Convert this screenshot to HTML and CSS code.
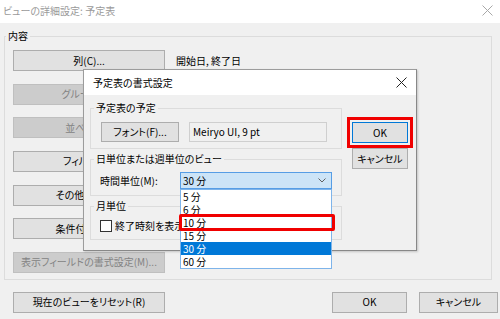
FILE: index.html
```html
<!DOCTYPE html>
<html lang="ja">
<head>
<meta charset="utf-8">
<title>ビューの詳細設定</title>
<link rel="stylesheet" href="styles.css">
</head>
<body>
<div class="window">
  <div class="titlebar">
    <span class="title">ビューの詳細設定: 予定表</span>
    <svg class="close-x" width="11" height="11" viewBox="0 0 11 11"><path d="M0.5 0.5 L10.5 10.5 M10.5 0.5 L0.5 10.5" stroke="#a8a8a8" stroke-width="1" fill="none"/></svg>
  </div>

  <fieldset class="group main-group">
    <legend>内容</legend>
    <div class="rows">
      <div class="row"><button class="btn wide">列(C)...</button><span class="value">開始日, 終了日</span></div>
      <div class="row"><button class="btn wide" disabled>グループ化...</button></div>
      <div class="row"><button class="btn wide" disabled>並べ替え...</button></div>
      <div class="row"><button class="btn wide">フィルター...</button></div>
      <div class="row"><button class="btn wide">その他の設定...</button></div>
      <div class="row"><button class="btn wide">条件付き書式...</button></div>
      <div class="row"><button class="btn wide" disabled>表示フィールドの書式設定(M)...</button></div>
    </div>
  </fieldset>

  <div class="footer">
    <button class="btn wide">現在のビューをリセット(R)</button>
    <div class="footer-right">
      <button class="btn ok-main">OK</button>
      <button class="btn cancel-main">キャンセル</button>
    </div>
  </div>

  <div class="dialog">
    <div class="dlg-titlebar">
      <span class="dlg-title">予定表の書式設定</span>
      <svg class="close-x dlg-close" width="11" height="11" viewBox="0 0 11 11"><path d="M0.5 0.5 L10.5 10.5 M10.5 0.5 L0.5 10.5" stroke="#222" stroke-width="1" fill="none"/></svg>
    </div>
    <div class="dlg-body">
      <div class="dlg-left">
        <fieldset class="group sub-group g1">
          <legend>予定表の予定</legend>
          <div class="g1-content">
            <button class="btn font-btn">フォント(F)...</button>
            <div class="font-box">Meiryo UI, 9 pt</div>
          </div>
        </fieldset>
        <fieldset class="group sub-group g2">
          <legend>日単位または週単位のビュー</legend>
          <div class="g2-content">
            <span class="field-label">時間単位(M):</span>
            <div class="combo-wrap">
              <div class="combo">
                <span>30 分</span>
                <svg class="chev" width="8" height="5" viewBox="0 0 8 5"><path d="M0.5 0.5 L4 4 L7.5 0.5" stroke="#606060" stroke-width="1" fill="none"/></svg>
              </div>
              <ul class="list">
                <li>5 分</li>
                <li>6 分</li>
                <li>10 分</li>
                <li>15 分</li>
                <li class="sel">30 分</li>
                <li>60 分</li>
              </ul>
              <div class="mark mark-item"></div>
            </div>
          </div>
        </fieldset>
        <fieldset class="group sub-group g3">
          <legend>月単位</legend>
          <div class="g3-content">
            <span class="checkbox"></span>
            <span>終了時刻を表示</span>
          </div>
        </fieldset>
      </div>
      <div class="dlg-right">
        <button class="btn dlg-btn ok-dlg">OK</button>
        <button class="btn dlg-btn">キャンセル</button>
      </div>
    </div>
  </div>
</div>
</body>
</html>
```

FILE: styles.css
```css
html, body {
  margin: 0;
  padding: 0;
}
body {
  width: 500px;
  height: 319px;
  overflow: hidden;
  background: #f0f0f0;
  font-family: "Noto Sans CJK JP", "Noto Sans", sans-serif;
  font-size: 10px;
  line-height: 12px;
  font-feature-settings: "palt" 1;
  color: #000;
}
.window {
  position: relative;
  width: 500px;
  height: 319px;
}
.titlebar {
  height: 23px;
  background: #fff;
  display: flex;
  align-items: center;
  justify-content: space-between;
  padding: 0 7px 2px 3px;
  box-sizing: border-box;
}
.title {
  color: #9a9a9a;
}
.close-x {
  display: block;
}

.group {
  border: 1px solid #dcdcdc;
  margin: 0;
  padding: 0;
  min-width: 0;
}
.group legend {
  padding: 0 2px;
  line-height: 12px;
}
.main-group {
  margin: 7px 0 0 4px;
  width: 488px;
  box-sizing: border-box;
}
.main-group legend {
  margin-left: 1px;
}
.rows {
  display: grid;
  grid-auto-rows: 21px;
  row-gap: 12.67px;
  padding: 8px 0 6px 8px;
}
.row {
  display: flex;
  align-items: center;
}
.value {
  margin-left: 11px;
}

.btn {
  font: inherit;
  font-feature-settings: "palt" 1;
  color: #000;
  background: #e1e1e1;
  border: 1px solid #adadad;
  padding: 0;
  margin: 0;
  box-sizing: border-box;
  white-space: nowrap;
  overflow: hidden;
}
.btn:disabled {
  background: #cccccc;
  border-color: #bfbfbf;
  color: #838383;
}
.wide {
  width: 152px;
  height: 21px;
}

.footer {
  display: flex;
  justify-content: space-between;
  margin-top: 12px;
  padding: 0 2px 0 13px;
}
.footer-right {
  display: flex;
  gap: 12px;
}
.ok-main {
  width: 75px;
  height: 21px;
}
.cancel-main {
  width: 79px;
  height: 21px;
}

/* inner dialog */
.dialog {
  position: absolute;
  left: 83px;
  top: 69px;
  width: 334px;
  height: 182px;
  box-sizing: border-box;
  border: 1px solid #9c9c9c;
  border-right-color: #888;
  border-bottom-color: #888;
  background: #f0f0f0;
  box-shadow: 1px 1px 2px rgba(0, 0, 0, 0.18);
}
.dlg-titlebar {
  height: 25px;
  background: #fff;
  display: flex;
  align-items: center;
  justify-content: space-between;
  padding: 0 9px 0 9px;
  box-sizing: border-box;
}
.dlg-title {
  font-size: 10px;
}
.dlg-body {
  display: flex;
  padding: 7px 0 0 6px;
}
.dlg-left {
  width: 252px;
}
.sub-group legend {
  margin-left: 3px;
}
.g2, .g3 {
  margin-top: 4px;
}
.g1-content {
  display: flex;
  align-items: center;
  gap: 10px;
  padding: 8px 13px 6px 10px;
}
.font-btn {
  width: 78px;
  height: 20px;
}
.font-box {
  width: 138px;
  height: 20px;
  box-sizing: border-box;
  border: 1px solid #cfcfcf;
  background: #f0f0f0;
  padding-left: 3px;
  display: flex;
  align-items: center;
}
.g2-content {
  display: flex;
  align-items: center;
  padding: 7px 0 6px 9px;
}
.field-label {
  width: 80px;
}
.combo-wrap {
  position: relative;
}
.combo {
  width: 152px;
  height: 17px;
  box-sizing: border-box;
  border: 1px solid #569de5;
  background: #cce4f7;
  display: flex;
  align-items: center;
  justify-content: space-between;
  padding: 0 5px 0 2px;
}
.list {
  position: absolute;
  top: 100%;
  left: 0;
  width: 152px;
  box-sizing: border-box;
  margin: 0;
  padding: 0;
  list-style: none;
  background: #fff;
  border: 1px solid #7eb4ea;
  z-index: 2;
}
.list li {
  height: 13px;
  line-height: 13px;
  padding-left: 2px;
}
.list li.sel {
  background: #0078d7;
  color: #fff;
}
.mark {
  position: absolute;
  border: 3px solid #f00000;
  border-radius: 2px;
  box-sizing: border-box;
  z-index: 3;
}
.mark-item {
  left: -1px;
  top: 42px;
  width: 156px;
  height: 17px;
}
.g3-content {
  display: flex;
  align-items: center;
  padding: 7px 0 7px 9px;
  height: 13px;
}
.checkbox {
  width: 12px;
  height: 12px;
  box-sizing: border-box;
  border: 1px solid #333;
  background: #fff;
  margin-right: 3px;
}
.dlg-right {
  margin-left: 10px;
  padding-top: 20px;
  display: flex;
  flex-direction: column;
  gap: 5px;
}
.dlg-btn {
  width: 56px;
  height: 21px;
}
.ok-dlg {
  border-color: #0078d7;
  outline: 3px solid #f00000;
  outline-offset: 2px;
  border-radius: 0;
}
```
